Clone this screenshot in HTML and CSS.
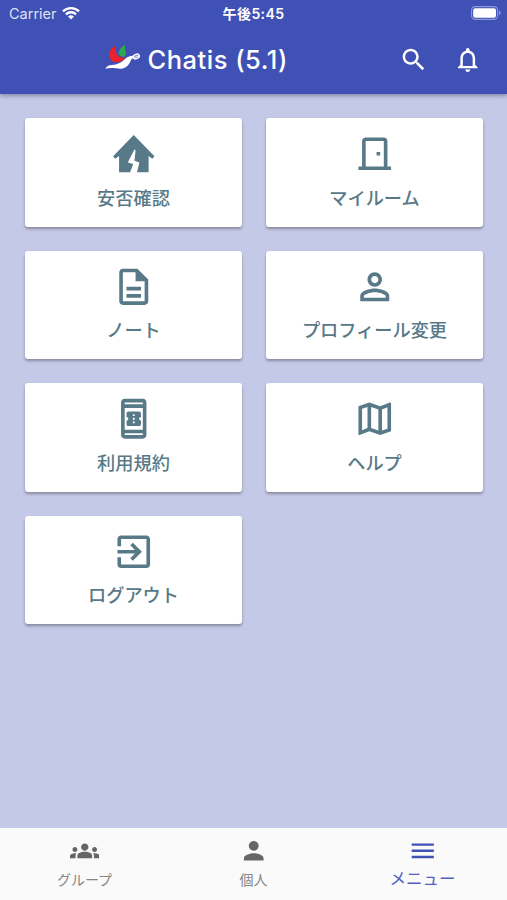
FILE: index.html
```html
<!DOCTYPE html>
<html lang="ja">
<head>
    <meta charset="UTF-8">
    <meta name="viewport" content="width=device-width, initial-scale=1.0">
    <title>Chatis</title>
    <link rel="stylesheet" href="styles.css">
</head>
<body>
    <header class="header">
        <div class="status">
            <div class="carrier">
                <span>Carrier</span>
                <svg class="wifi" viewBox="0 0 18 14">
                    <path d="M1 5.3a11.5 11.5 0 0 1 16 0M3.9 8.3a7.4 7.4 0 0 1 10.2 0" fill="none" stroke="#fff" stroke-width="2.3"/>
                    <path d="M9 13.6l3-3a4.3 4.3 0 0 0-6 0z" fill="#fff"/>
                </svg>
            </div>
            <span class="time">午後5:45</span>
            <svg class="battery" viewBox="0 0 30 14">
                <rect x=".6" y=".6" width="26" height="12.8" rx="3.6" fill="none" stroke="#8e99d6" stroke-width="1.1"/>
                <rect x="2.2" y="2.2" width="22.8" height="9.6" rx="2" fill="#fff"/>
                <path d="M28 4.8c2.1.7 2.1 3.7 0 4.4z" fill="#8e99d6"/>
            </svg>
        </div>
        <div class="toolbar">
            <div class="brand">
                <svg class="logo" viewBox="0 0 36 26">
                    <path d="M9.800 2C6.400 4 4 7.500 4.300 11c.2 4 2.500 6.600 6 7.300 3.500.3 7.500-1 10-4.300-3 0-6.300-1-7.900-2.800C10.200 8.500 10.700 5 9.800 2z" fill="#e9222b"/>
                    <path d="M20.300.8c-3.600 2.200-6.400 5-6.700 9 .8 2 2.800 3.200 5.800 3 1.500-1.500 1.800-3.200 1.200-5-1-2.200-.9-4.500-.3-7z" fill="#2fa84c"/>
                    <path d="M.4 24.800c1-2.600 3.300-3.700 6.600-3.900 5.300-.3 9-2.300 12.500-5.500 2.700-2.500 5.300-3.800 8.600-3.700l.5 2.200c-2 .5-2.500 1.800-3.300 3.700-1.600 4-4.800 7-9 7.100-5 .1-10-1.600-15.900.1z" fill="#fff"/>
                    <ellipse cx="31.300" cy="12.500" rx="3.200" ry="2.200" transform="rotate(-24 31.300 12.500)" fill="#8b95d2" stroke="#fff" stroke-width="1.300"/>
                    <path d="M28.500 14.500l2.500-1.600 3-.8" fill="none" stroke="#fff" stroke-width=".8"/>
                </svg>
                <h1>Chatis (5.1)</h1>
            </div>
            <div class="actions">
                <svg viewBox="0 0 24 24"><path d="M15.500 14h-.79l-.28-.27C15.410 12.590 16 11.110 16 9.500 16 5.910 13.090 3 9.500 3S3 5.910 3 9.500 5.910 16 9.500 16c1.610 0 3.090-.59 4.230-1.570l.27.28v.79l5 4.990L20.490 19l-4.990-5zm-6 0C7.010 14 5 11.990 5 9.500S7.010 5 9.500 5 14 7.010 14 9.500 11.990 14 9.500 14z"/></svg>
                <svg viewBox="0 0 24 24"><path d="M12 22c1.100 0 2-.9 2-2h-4c0 1.100.9 2 2 2zm6-6v-5c0-3.070-1.630-5.640-4.500-6.320V4c0-.83-.67-1.500-1.500-1.500s-1.500.67-1.500 1.500v.68C7.640 5.360 6 7.920 6 11v5l-2 2v1h16v-1l-2-2zm-2 1H8v-6c0-2.480 1.510-4.500 4-4.500s4 2.020 4 4.500v6z"/></svg>
            </div>
        </div>
    </header>

    <main class="menu">
        <a class="card">
            <svg viewBox="0 0 24 24"><path d="M12 1.700L.6 13.400l1.200 1.300 2.100-1.500v9H10l1.700-4.600-3-.8 3.700-7.100.6.300-.6 5.900 2.700.9-1.300 5.400h6.400v-9l2.100 1.500 1.100-1.300z"/></svg>
            <span>安否確認</span>
        </a>
        <a class="card">
            <svg viewBox="0 0 24 24"><path d="M19 19V5c0-1.100-.9-2-2-2H7c-1.100 0-2 .9-2 2v14H3v2h18v-2h-2zm-2 0H7V5h10v14zm-4-8h2v2h-2v-2z"/></svg>
            <span>マイルーム</span>
        </a>
        <a class="card">
            <svg viewBox="0 0 24 24"><path d="M8 16h8v2H8zm0-4h8v2H8zm6-10H6c-1.100 0-2 .9-2 2v16c0 1.100.89 2 1.990 2H18c1.100 0 2-.9 2-2V8l-6-6zm4 18H6V4h7v5h5v11z"/></svg>
            <span>ノート</span>
        </a>
        <a class="card">
            <svg viewBox="0 0 24 24"><path d="M12 6c1.100 0 2 .9 2 2s-.9 2-2 2-2-.9-2-2 .9-2 2-2m0 9c2.700 0 5.800 1.290 6 2v1H6v-.99c.2-.72 3.300-2.010 6-2.010m0-11C9.790 4 8 5.790 8 8s1.790 4 4 4 4-1.790 4-4-1.790-4-4-4zm0 9c-2.670 0-8 1.340-8 4v3h16v-3c0-2.660-5.330-4-8-4z"/></svg>
            <span>プロフィール変更</span>
        </a>
        <a class="card">
            <svg viewBox="0 0 24 24"><path d="M17 1H7c-1.100 0-2 .9-2 2v18c0 1.100.9 2 2 2h10c1.100 0 2-.9 2-2V3c0-1.100-.9-2-2-2zM7 4V3h10v1H7zm0 14V6h10v12H7zm0 3v-1h10v1H7z"/><path d="M16 11V9.140C16 8.510 15.550 8 15 8H9c-.55 0-1 .51-1 1.140V11c.55 0 1 .45 1 1s-.45 1-1 1v1.860c0 .63.45 1.140 1 1.140h6c.55 0 1-.51 1-1.140V13c-.55 0-1-.45-1-1s.45-1 1-1zm-3.500 3.500h-1v-1h1v1zm0-2h-1v-1h1v1zm0-2h-1v-1h1v1z"/></svg>
            <span>利用規約</span>
        </a>
        <a class="card">
            <svg viewBox="0 0 24 24"><path d="M20.500 3l-.16.030L15 5.100 9 3 3.360 4.900c-.21.070-.36.250-.36.480V20.500c0 .28.220.5.5.5l.16-.03L9 18.900l6 2.100 5.640-1.900c.21-.07.36-.25.36-.48V3.500c0-.28-.22-.5-.5-.5zM10 5.470l4 1.400v11.660l-4-1.400V5.470zm-5 .99l3-1.010v11.700l-3 1.160V6.460zm14 11.080l-3 1.010V6.860l3-1.160v11.840z"/></svg>
            <span>ヘルプ</span>
        </a>
        <a class="card">
            <svg viewBox="0 0 24 24"><path d="M10.090 15.590L11.500 17l5-5-5-5-1.410 1.410L12.670 11H3v2h9.670l-2.580 2.590zM19 3H5c-1.110 0-2 .9-2 2v4h2V5h14v14H5v-4H3v4c0 1.100.89 2 2 2h14c1.100 0 2-.9 2-2V5c0-1.100-.9-2-2-2z"/></svg>
            <span>ログアウト</span>
        </a>
    </main>

    <nav class="tabs">
        <a class="tab">
            <svg viewBox="0 0 24 24"><path d="M12 12.750c1.630 0 3.070.39 4.240.9 1.080.48 1.760 1.560 1.760 2.730V18H6v-1.610c0-1.180.68-2.260 1.760-2.730 1.170-.52 2.610-.91 4.240-.91zM4 13c1.100 0 2-.9 2-2s-.9-2-2-2-2 .9-2 2 .9 2 2 2zm1.130 1.100C4.760 14.040 4.390 14 4 14c-.99 0-1.930.21-2.780.58C.48 14.900 0 15.620 0 16.430V18h4.500v-1.610c0-.83.23-1.610.63-2.290zM20 13c1.100 0 2-.9 2-2s-.9-2-2-2-2 .9-2 2 .9 2 2 2zm4 3.430c0-.81-.48-1.530-1.220-1.850-.85-.37-1.790-.58-2.780-.58-.39 0-.76.040-1.130.1.400.68.630 1.460.63 2.290V18H24v-1.570zM12 6c1.660 0 3 1.340 3 3s-1.340 3-3 3-3-1.340-3-3 1.340-3 3-3z"/></svg>
            <span>グループ</span>
        </a>
        <a class="tab">
            <svg viewBox="0 0 24 24"><path d="M12 12c2.210 0 4-1.790 4-4s-1.790-4-4-4-4 1.790-4 4 1.790 4 4 4zm0 2c-2.670 0-8 1.340-8 4v2h16v-2c0-2.660-5.330-4-8-4z"/></svg>
            <span>個人</span>
        </a>
        <a class="tab active">
            <svg viewBox="0 0 24 24"><path d="M3 18h18v-2H3v2zm0-5h18v-2H3v2zm0-7v2h18V6H3z"/></svg>
            <span>メニュー</span>
        </a>
    </nav>
</body>
</html>
```

FILE: styles.css
```css
*{
    margin: 0;
    padding: 0;
    box-sizing: border-box;
}
body{
    height: 100vh;
    display: flex;
    flex-direction: column;
    background-color: #c5c9e8;
    font-family: Inter, "Noto Sans CJK JP", sans-serif;
    overflow: hidden;
}
svg {
    display: block;
    fill: currentColor;
    flex-shrink: 0;
}
.header {
    height: 94px;
    background-color: #3f51b5;
    color: white;
    box-shadow: 0 2px 4px rgba(0,0,0,0.3);
}
.status {
    height: 26px;
    padding: 0 6px 0 9px;
    display: grid;
    grid-template-columns: 1fr auto 1fr;
    align-items: center;
    font-size: 14.5px;
}
.carrier {
    display: flex;
    align-items: center;
    gap: 5px;
    color: #dde0f4;
}
.wifi {
    width: 18px;
    height: 14px;
}
.time {
    margin-right: 3px;
    font-size: 14px;
    font-weight: 600;
    letter-spacing: 0.4px;
}
.battery {
    width: 30px;
    height: 14px;
    justify-self: end;
}
.toolbar {
    height: 67px;
    padding: 0 24.5px 0 105px;
    display: flex;
    align-items: center;
    justify-content: space-between;
}
.brand {
    display: flex;
    align-items: center;
    gap: 6.5px;
}
.logo {
    width: 36px;
    height: 26px;
    margin-top: -5px;
}
h1 {
    font-size: 25.5px;
    font-weight: 500;
    letter-spacing: 0.5px;
    white-space: nowrap;
}
.actions {
    display: flex;
    gap: 24.5px;
}
.actions svg {
    width: 29.5px;
    height: 29.5px;
}
.menu {
    flex: 1;
    padding: 24px 24px 0 25px;
    display: grid;
    grid-template-columns: 1fr 1fr;
    grid-auto-rows: 108.5px;
    gap: 24px;
    align-content: start;
}
.card {
    padding-top: 14px;
    display: flex;
    flex-direction: column;
    align-items: center;
    gap: 9px;
    background-color: white;
    border-radius: 3px;
    box-shadow: 0 2px 3px rgba(0,0,0,0.32);
    color: #587a88;
    font-size: 18.2px;
    font-weight: 500;
    line-height: 26px;
}
.card svg {
    width: 43.5px;
    height: 43.5px;
}
.tabs {
    height: 72px;
    display: grid;
    grid-template-columns: repeat(3, 1fr);
    background-color: #fafafa;
}
.tab {
    padding-top: 8px;
    display: flex;
    flex-direction: column;
    align-items: center;
    gap: 4px;
    color: #666;
    font-size: 14px;
    line-height: 20px;
}
.tab svg {
    width: 29.5px;
    height: 29.5px;
}
.tab span {
    color: #858585;
}
.active {
    gap: 3px;
    color: #3f51b5;
    font-size: 16.5px;
}
.active span {
    color: #5261bd;
}
```
